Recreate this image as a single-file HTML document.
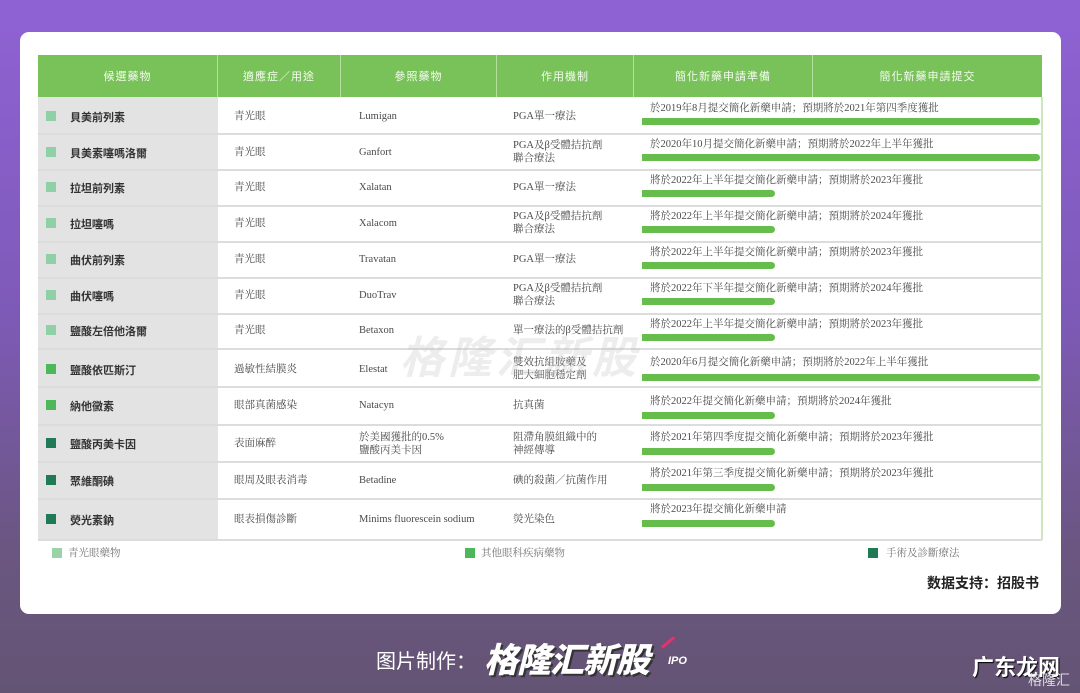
<!DOCTYPE html>
<html><head><meta charset="utf-8"><style>
*{margin:0;padding:0;box-sizing:border-box}
body{width:1080px;height:693px;overflow:hidden;position:relative;font-family:"Liberation Serif","Noto Serif CJK SC",serif;background:linear-gradient(180deg,#8f62d4 0%,#7e5ab8 45%,#6a5680 80%,#645474 100%)}
.card{position:absolute;left:20px;top:32px;width:1041px;height:582px;background:#fff;border-radius:9px}
.hdr{position:absolute;top:55px;height:42px;background:#79c25a;color:#f4fbef;font-family:"Liberation Sans","Noto Sans CJK TC",sans-serif;font-size:11px;display:flex;align-items:center;justify-content:center;border-right:1px solid #b5e0a0;letter-spacing:1px}
.gray{position:absolute;left:38px;top:97px;width:180px;height:443px;background:#e3e3e3}
.line{position:absolute;left:38px;width:1004px;height:2px;background:#dcdcdc}
.rb{position:absolute;left:1041px;top:97px;width:1.5px;height:443px;background:#cde7c0}
.t{position:absolute;font-size:10.5px;color:#4a4a4a;line-height:13px;white-space:nowrap}
.n{position:absolute;left:70px;font-family:"Liberation Sans","Noto Sans CJK TC",sans-serif;font-weight:bold;font-size:11px;color:#333}
.sq{position:absolute;left:46px;width:10px;height:10px}
.bar{position:absolute;left:642px;height:7px;background:#67bd4c;border-radius:0 4px 4px 0}
.wm{position:absolute;left:400px;top:322px;font-family:"Liberation Sans","Noto Sans CJK SC",sans-serif;font-weight:bold;font-style:italic;font-size:44px;color:rgba(190,190,190,.28);letter-spacing:4px}
</style></head><body>
<div class="card"></div>
<div class="hdr" style="left:38px;width:180px">候選藥物</div>
<div class="hdr" style="left:218px;width:123px">適應症／用途</div>
<div class="hdr" style="left:341px;width:156px">參照藥物</div>
<div class="hdr" style="left:497px;width:137px">作用機制</div>
<div class="hdr" style="left:634px;width:179px">簡化新藥申請準備</div>
<div class="hdr" style="left:813px;width:229px;border-right:none">簡化新藥申請提交</div>
<div class="gray"></div>
<div class="rb"></div>
<div class="line" style="top:133px"></div><div class="line" style="top:169px"></div><div class="line" style="top:205px"></div><div class="line" style="top:241px"></div><div class="line" style="top:277px"></div><div class="line" style="top:313px"></div><div class="line" style="top:348px"></div><div class="line" style="top:386px"></div><div class="line" style="top:424px"></div><div class="line" style="top:461px"></div><div class="line" style="top:498px"></div><div class="line" style="top:539px"></div>

<div class="sq" style="top:111px;background:#8fd0a6"></div><div class="n" style="top:109px">貝美前列素</div>
<div class="sq" style="top:147px;background:#8fd0a6"></div><div class="n" style="top:145px">貝美素噻嗎洛爾</div>
<div class="sq" style="top:182px;background:#8fd0a6"></div><div class="n" style="top:180px">拉坦前列素</div>
<div class="sq" style="top:218px;background:#8fd0a6"></div><div class="n" style="top:216px">拉坦噻嗎</div>
<div class="sq" style="top:254px;background:#8fd0a6"></div><div class="n" style="top:252px">曲伏前列素</div>
<div class="sq" style="top:290px;background:#8fd0a6"></div><div class="n" style="top:288px">曲伏噻嗎</div>
<div class="sq" style="top:325px;background:#8fd0a6"></div><div class="n" style="top:323px">鹽酸左倍他洛爾</div>
<div class="sq" style="top:364px;background:#4cb85a"></div><div class="n" style="top:362px">鹽酸依匹斯汀</div>
<div class="sq" style="top:400px;background:#4cb85a"></div><div class="n" style="top:398px">納他黴素</div>
<div class="sq" style="top:438px;background:#1f7a55"></div><div class="n" style="top:436px">鹽酸丙美卡因</div>
<div class="sq" style="top:475px;background:#1f7a55"></div><div class="n" style="top:473px">聚維酮碘</div>
<div class="sq" style="top:514px;background:#1f7a55"></div><div class="n" style="top:512px">熒光素鈉</div>

<div class="t" style="left:234px;top:110px">青光眼</div><div class="t" style="left:359px;top:110px">Lumigan</div><div class="t" style="left:513px;top:110px">PGA單一療法</div>
<div class="t" style="left:234px;top:146px">青光眼</div><div class="t" style="left:359px;top:146px">Ganfort</div><div class="t" style="left:513px;top:139px">PGA及β受體拮抗劑<br>聯合療法</div>
<div class="t" style="left:234px;top:181px">青光眼</div><div class="t" style="left:359px;top:181px">Xalatan</div><div class="t" style="left:513px;top:181px">PGA單一療法</div>
<div class="t" style="left:234px;top:217px">青光眼</div><div class="t" style="left:359px;top:217px">Xalacom</div><div class="t" style="left:513px;top:210px">PGA及β受體拮抗劑<br>聯合療法</div>
<div class="t" style="left:234px;top:253px">青光眼</div><div class="t" style="left:359px;top:253px">Travatan</div><div class="t" style="left:513px;top:253px">PGA單一療法</div>
<div class="t" style="left:234px;top:289px">青光眼</div><div class="t" style="left:359px;top:289px">DuoTrav</div><div class="t" style="left:513px;top:282px">PGA及β受體拮抗劑<br>聯合療法</div>
<div class="t" style="left:234px;top:324px">青光眼</div><div class="t" style="left:359px;top:324px">Betaxon</div><div class="t" style="left:513px;top:324px">單一療法的β受體拮抗劑</div>
<div class="t" style="left:234px;top:363px">過敏性結膜炎</div><div class="t" style="left:359px;top:363px">Elestat</div><div class="t" style="left:513px;top:356px">雙效抗組胺藥及<br>肥大細胞穩定劑</div>
<div class="t" style="left:234px;top:399px">眼部真菌感染</div><div class="t" style="left:359px;top:399px">Natacyn</div><div class="t" style="left:513px;top:399px">抗真菌</div>
<div class="t" style="left:234px;top:437px">表面麻醉</div><div class="t" style="left:359px;top:431px">於美國獲批的0.5%<br>鹽酸丙美卡因</div><div class="t" style="left:513px;top:431px">阻滯角膜組織中的<br>神經傳導</div>
<div class="t" style="left:234px;top:474px">眼周及眼表消毒</div><div class="t" style="left:359px;top:474px">Betadine</div><div class="t" style="left:513px;top:474px">碘的殺菌／抗菌作用</div>
<div class="t" style="left:234px;top:513px">眼表損傷診斷</div><div class="t" style="left:359px;top:513px">Minims fluorescein sodium</div><div class="t" style="left:513px;top:513px">熒光染色</div>

<div class="t" style="left:650px;top:102px">於2019年8月提交簡化新藥申請；預期將於2021年第四季度獲批</div><div class="bar" style="top:118px;width:398px"></div>
<div class="t" style="left:650px;top:138px">於2020年10月提交簡化新藥申請；預期將於2022年上半年獲批</div><div class="bar" style="top:154px;width:398px"></div>
<div class="t" style="left:650px;top:174px">將於2022年上半年提交簡化新藥申請；預期將於2023年獲批</div><div class="bar" style="top:190px;width:133px"></div>
<div class="t" style="left:650px;top:210px">將於2022年上半年提交簡化新藥申請；預期將於2024年獲批</div><div class="bar" style="top:226px;width:133px"></div>
<div class="t" style="left:650px;top:246px">將於2022年上半年提交簡化新藥申請；預期將於2023年獲批</div><div class="bar" style="top:262px;width:133px"></div>
<div class="t" style="left:650px;top:282px">將於2022年下半年提交簡化新藥申請；預期將於2024年獲批</div><div class="bar" style="top:298px;width:133px"></div>
<div class="t" style="left:650px;top:318px">將於2022年上半年提交簡化新藥申請；預期將於2023年獲批</div><div class="bar" style="top:334px;width:133px"></div>
<div class="t" style="left:650px;top:356px">於2020年6月提交簡化新藥申請；預期將於2022年上半年獲批</div><div class="bar" style="top:374px;width:398px"></div>
<div class="t" style="left:650px;top:395px">將於2022年提交簡化新藥申請；預期將於2024年獲批</div><div class="bar" style="top:412px;width:133px"></div>
<div class="t" style="left:650px;top:431px">將於2021年第四季度提交簡化新藥申請；預期將於2023年獲批</div><div class="bar" style="top:448px;width:133px"></div>
<div class="t" style="left:650px;top:467px">將於2021年第三季度提交簡化新藥申請；預期將於2023年獲批</div><div class="bar" style="top:484px;width:133px"></div>
<div class="t" style="left:650px;top:503px">將於2023年提交簡化新藥申請</div><div class="bar" style="top:520px;width:133px"></div>

<div class="sq" style="left:52px;top:548px;background:#9ad3a8"></div><div class="t" style="left:68px;top:547px;color:#777">青光眼藥物</div>
<div class="sq" style="left:465px;top:548px;background:#4cb85a"></div><div class="t" style="left:481px;top:547px;color:#777">其他眼科疾病藥物</div>
<div class="sq" style="left:868px;top:548px;background:#1f7a55"></div><div class="t" style="left:886px;top:547px;color:#777">手術及診斷療法</div>
<div class="t" style="left:927px;top:577px;font-family:'Liberation Sans','Noto Sans CJK SC',sans-serif;font-size:14px;font-weight:bold;color:#222">数据支持：招股书</div>
<div class="wm">格隆汇新股</div>

<div style="position:absolute;left:376px;top:645px;font-family:'Liberation Sans','Noto Sans CJK SC',sans-serif;font-size:20px;color:#fff">图片制作：</div>
<div style="position:absolute;left:484px;top:633px;font-family:'Liberation Sans','Noto Sans CJK SC',sans-serif;font-size:34px;font-weight:900;font-style:italic;color:#fff;text-shadow:2px 2px 0 #333;letter-spacing:-1px">格隆汇新股</div>
<div style="position:absolute;left:668px;top:655px;font-family:'Liberation Sans',sans-serif;font-size:11px;font-weight:bold;font-style:italic;color:#fff">IPO</div>
<div style="position:absolute;left:660px;top:641px;width:16px;height:3px;background:#e8306a;transform:rotate(-40deg)"></div>
<div style="position:absolute;left:972px;top:650px;font-family:'Liberation Sans','Noto Sans CJK SC',sans-serif;font-size:22px;font-weight:bold;color:#fff;text-shadow:1px 1px 1px #000">广东龙网</div>
<div style="position:absolute;left:1028px;top:670px;font-family:'Liberation Sans','Noto Sans CJK SC',sans-serif;font-size:14px;color:#ddd">格隆汇</div>
</body></html>
